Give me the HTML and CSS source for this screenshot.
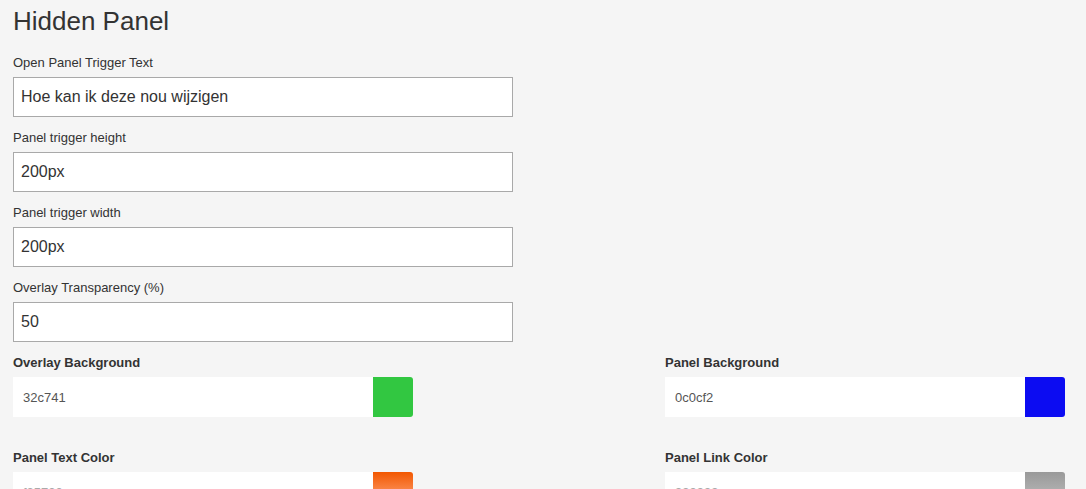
FILE: index.html
```html
<!DOCTYPE html>
<html lang="en">
<head>
    <meta charset="UTF-8">
    <meta name="viewport" content="width=device-width, initial-scale=1.0">
    <title>Hidden Panel</title>
    <link rel="stylesheet" href="styles.css">
</head>
<body>
    <div class="settings">
        <h1>Hidden Panel</h1>

        <!-- Plain text options -->
        <div class="field">
            <label for="trigger-text">Open Panel Trigger Text</label>
            <input type="text" id="trigger-text" value="Hoe kan ik deze nou wijzigen">
        </div>
        <div class="field">
            <label for="trigger-height">Panel trigger height</label>
            <input type="text" id="trigger-height" value="200px">
        </div>
        <div class="field">
            <label for="trigger-width">Panel trigger width</label>
            <input type="text" id="trigger-width" value="200px">
        </div>
        <div class="field">
            <label for="overlay-opacity">Overlay Transparency (%)</label>
            <input type="text" id="overlay-opacity" value="50">
        </div>

        <!-- Colour options -->
        <div class="colors">
            <div class="color-field">
                <label for="overlay-bg">Overlay Background</label>
                <div class="picker">
                    <input type="text" id="overlay-bg" value="32c741">
                    <span class="swatch swatch-green"></span>
                </div>
            </div>
            <div class="color-field">
                <label for="panel-bg">Panel Background</label>
                <div class="picker">
                    <input type="text" id="panel-bg" value="0c0cf2">
                    <span class="swatch swatch-blue"></span>
                </div>
            </div>
            <div class="color-field">
                <label for="panel-text">Panel Text Color</label>
                <div class="picker faded">
                    <input type="text" id="panel-text" value="f25700">
                    <span class="swatch swatch-orange"></span>
                </div>
            </div>
            <div class="color-field">
                <label for="panel-link">Panel Link Color</label>
                <div class="picker faded">
                    <input type="text" id="panel-link" value="999999">
                    <span class="swatch swatch-grey"></span>
                </div>
            </div>
        </div>
    </div>
</body>
</html>
```

FILE: styles.css
```css
* {
    box-sizing: border-box;
    margin: 0;
    padding: 0;
}
body {
    font-family: "Liberation Sans", Arial, sans-serif;
    background-color: #f5f5f5;
    color: #333;
    padding: 6px 13px 0;
}
.settings {
    display: flex;
    flex-direction: column;
    gap: 12px;
}
h1 {
    font-size: 26px;
    font-weight: normal;
    line-height: 30px;
    margin-bottom: 6px;
}
label {
    display: block;
    font-size: 13px;
    line-height: 18px;
    margin-bottom: 5px;
}
.field input {
    width: 500px;
    height: 40px;
    padding: 0 7px;
    font-family: inherit;
    font-size: 16px;
    color: #333;
    background-color: white;
    border: 1px solid #a9a9a9;
}
.colors {
    display: grid;
    grid-template-columns: 400px 400px;
    column-gap: 252px;
    row-gap: 32px;
}
.color-field label {
    font-weight: bold;
}
.picker {
    display: flex;
    height: 40px;
}
.picker input {
    width: 360px;
    height: 40px;
    padding: 0 10px;
    font-family: inherit;
    font-size: 13px;
    color: #555;
    background-color: white;
    border: none;
}
.picker.faded input {
    color: #aaa;
}
.swatch {
    width: 40px;
    height: 40px;
    border-radius: 0 3px 3px 0;
}
.swatch-green {
    background-color: #32c741;
}
.swatch-blue {
    background-color: #0c0cf2;
}
.swatch-orange {
    background: linear-gradient(#f25700, #fb8a4e 50%, #fdc0a0);
}
.swatch-grey {
    background: linear-gradient(#999999, #b0b0b0 50%, #d0d0d0);
}
```
